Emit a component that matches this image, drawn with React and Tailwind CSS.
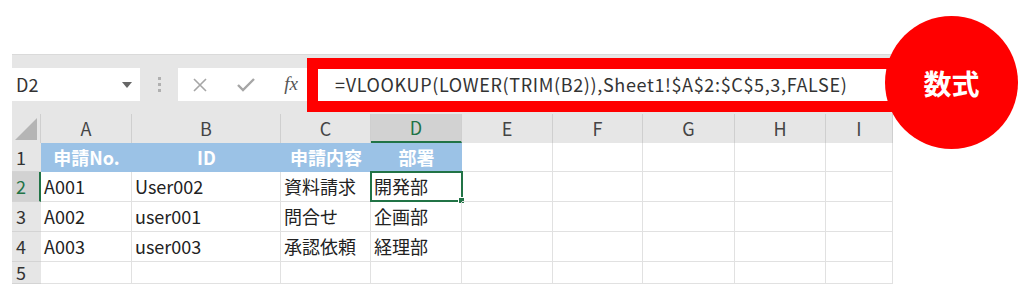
import React from "react";

const cols = ["A", "B", "C", "D", "E", "F", "G", "H", "I"];
const widths = ["w-[91px]", "w-[149px]", "w-[90px]", "w-[91px]", "w-[91px]", "w-[90px]", "w-[92px]", "w-[91px]", "w-[67px]"];

const rows = [
  { n: "2", h: "h-[30px]", cells: ["A001", "User002", "資料請求", "開発部"] },
  { n: "3", h: "h-[30px]", cells: ["A002", "user001", "問合せ", "企画部"] },
  { n: "4", h: "h-[30px]", cells: ["A003", "user003", "承認依頼", "経理部"] },
  { n: "5", h: "h-[22px]", cells: ["", "", "", ""] },
];

const font = { fontFamily: '"Noto Sans CJK JP", "Noto Sans", sans-serif' };

function NameBox() {
  return (
    <div className="w-[128px] h-[33px] bg-white flex items-center justify-between pl-[4px] pr-[8px] text-[18px] text-[#333]">
      <span>D2</span>
      <svg width="10" height="6" viewBox="0 0 10 6">
        <path d="M0 0h10L5 6z" fill="#666" />
      </svg>
    </div>
  );
}

function FormulaBar() {
  return (
    <div className="flex-1 h-[33px] bg-white flex items-center">
      <div className="w-[140px] flex items-center justify-between pl-[14px] pr-[20px]">
        <svg width="16" height="16" viewBox="0 0 16 16">
          <path d="M2 2l12 12M14 2L2 14" stroke="#a6a6a6" strokeWidth="1.6" fill="none" />
        </svg>
        <svg width="18" height="14" viewBox="0 0 18 14">
          <path d="M1 7l5 5L17 1" stroke="#a6a6a6" strokeWidth="2.4" fill="none" />
        </svg>
        <span className="text-[19px] italic text-[#555]" style={{ fontFamily: '"Liberation Serif", serif' }}>
          fx
        </span>
      </div>
      <div className="pl-[17px] text-[18px] text-[#333] tracking-[0.65px] whitespace-nowrap">
        =VLOOKUP(LOWER(TRIM(B2)),Sheet1!$A$2:$C$5,3,FALSE)
      </div>
    </div>
  );
}

export default function App() {
  return (
    <div className="relative w-[1024px] h-[294px] bg-white overflow-hidden" style={font}>
      <div className="pl-[12px] pt-[54px]">
        <div className="w-[881px]">
          {/* toolbar */}
          <div className="h-[60px] bg-[#e6e6e6] border-t border-[#dadada] flex pt-[13px]">
            <NameBox />
            <div className="w-[38px] flex flex-col items-center justify-center gap-[3px] h-[33px]">
              <span className="w-[3px] h-[3px] bg-[#b0b0b0]" />
              <span className="w-[3px] h-[3px] bg-[#b0b0b0]" />
              <span className="w-[3px] h-[3px] bg-[#b0b0b0]" />
            </div>
            <FormulaBar />
          </div>

          {/* column headers */}
          <div className="flex h-[29px] bg-[#e6e6e6] text-[18px] text-[#444]">
            <div className="w-[29px] flex items-end justify-end pr-[3px] pb-[3px] border-r border-[#cfcfcf]">
              <svg width="22" height="22" viewBox="0 0 22 22">
                <path d="M22 0V22H0z" fill="#b5b5b5" />
              </svg>
            </div>
            {cols.map((c, i) => (
              <div
                key={c}
                className={
                  widths[i] +
                  " flex items-center justify-center border-r border-[#cfcfcf] " +
                  (c === "D" ? "bg-[#d2d2d2] text-[#217346] border-b-2 border-b-[#217346]" : "")
                }
              >
                {c}
              </div>
            ))}
          </div>

          {/* row 1 */}
          <div className="flex h-[29px] text-[18px]">
            <div className="w-[29px] bg-[#e6e6e6] text-[#333] flex items-center pl-[4px] border-b border-[#d4d4d4]">1</div>
            <div className="flex bg-[#9bc2e6] text-white font-bold items-center">
              <div className="w-[91px] text-center">申請No.</div>
              <div className="w-[149px] text-center">ID</div>
              <div className="w-[90px] text-center">申請内容</div>
              <div className="w-[91px] text-center">部署</div>
            </div>
            {widths.slice(4).map((w, i) => (
              <div key={i} className={w + " border-r border-b border-[#e1e1e1]"} />
            ))}
          </div>

          {/* data rows */}
          {rows.map((r) => (
            <div key={r.n} className={"flex text-[18px] " + r.h}>
              <div
                className={
                  "w-[29px] flex items-center pl-[4px] border-b border-[#d4d4d4] " +
                  (r.n === "2" ? "bg-[#d2d2d2] text-[#217346] border-r-2 border-r-[#217346]" : "bg-[#e6e6e6] text-[#333]")
                }
              >
                {r.n}
              </div>
              {widths.map((w, i) => (
                <div
                  key={i}
                  className={w + " relative flex items-center pl-[3px] text-[#222] whitespace-nowrap border-r border-b border-[#e1e1e1]"}
                >
                  {r.cells[i] || ""}
                  {r.n === "2" && i === 3 && (
                    <div className="absolute -left-px -top-px w-[93px] h-[31px] border-2 border-[#217346]">
                      <span className="absolute -right-[4px] -bottom-[4px] w-[7px] h-[7px] bg-[#217346] border border-white" />
                    </div>
                  )}
                </div>
              ))}
            </div>
          ))}
        </div>
      </div>

      {/* red annotation frame */}
      <div className="absolute left-[307px] top-[58px] w-[592px] h-[54px] border-[11px] border-[#ff0000]" />
      <div className="absolute left-[885px] top-[16px] w-[133px] h-[133px] rounded-full bg-[#ff0000] flex items-center justify-center">
        <span className="text-white font-bold text-[28px]">数式</span>
      </div>
    </div>
  );
}
